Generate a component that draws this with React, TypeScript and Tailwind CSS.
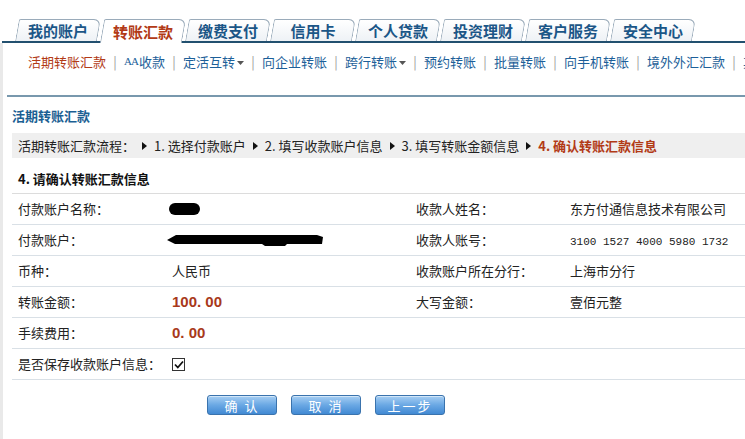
import React from 'react';

const cjk = '"Noto Sans CJK SC", "Liberation Sans", sans-serif';

const tabs = ['我的账户', '转账汇款', '缴费支付', '信用卡', '个人贷款', '投资理财', '客户服务', '安全中心'];

const subNav = [
  { label: '活期转账汇款', active: true },
  { label: '收款', aa: true },
  { label: '定活互转', caret: true },
  { label: '向企业转账' },
  { label: '跨行转账', caret: true },
  { label: '预约转账' },
  { label: '批量转账' },
  { label: '向手机转账' },
  { label: '境外外汇汇款' },
  { label: '其他' },
];

const steps = ['1. 选择付款账户', '2. 填写收款账户信息', '3. 填写转账金额信息'];

function Arrow() {
  return (
    <svg width="5" height="8" viewBox="0 0 5 8" className="mx-[7px] shrink-0">
      <path d="M0 0 L5 4 L0 8 Z" fill="#111" />
    </svg>
  );
}

function Caret() {
  return (
    <svg width="7" height="4" viewBox="0 0 7 4" className="ml-[2px] mt-[2px]">
      <path d="M0 0 L7 0 L3.5 4 Z" fill="#555" />
    </svg>
  );
}

function Tab({ label, active }: { label: string; active?: boolean }) {
  return (
    <div className={`relative flex items-center justify-center w-[82px] ${active ? 'h-[24px] -mb-[2px] z-10' : 'h-[22px]'}`}>
      <span
        className={`absolute inset-0 -skew-x-[10deg] rounded-tr-[7px] rounded-tl-[2px] border border-b-0 border-[#9aabba] ${
          active ? 'bg-white' : 'bg-gradient-to-b from-white to-[#eef2f6]'
        }`}
      />
      <span className={`relative text-[15px] font-bold leading-none ${active ? 'text-[#b23a16]' : 'text-[#1b5687]'}`}>{label}</span>
    </div>
  );
}

function Redact({ wide }: { wide?: boolean }) {
  if (wide) {
    return (
      <svg width="158" height="14" viewBox="0 0 158 14">
        <path d="M0 7 L9 2 L150 2 L156 4 L155 11 L120 11 L118 13 L98 13 L95 11 L8 11 Z" fill="#000" />
      </svg>
    );
  }
  return (
    <svg width="34" height="14" viewBox="0 0 34 14">
      <rect x="1" y="1" width="31" height="12" rx="6" fill="#000" />
    </svg>
  );
}

function Row({ l1, v1, l2, v2 }: { l1: string; v1: React.ReactNode; l2?: string; v2?: React.ReactNode }) {
  return (
    <div className="grid grid-cols-[154px_244px_154px_1fr] items-center h-[31px] border-b border-[#d9e0e6] pl-[6px] text-[13px] text-[#222]">
      <div>{l1}</div>
      <div>{v1}</div>
      <div>{l2}</div>
      <div>{v2}</div>
    </div>
  );
}

function Button({ children }: { children: React.ReactNode }) {
  return (
    <button
      type="button"
      className="w-[70px] h-[20px] rounded-[3px] border border-[#3a73ad] bg-gradient-to-b from-[#a6cef2] via-[#6aa8e4] to-[#4189d3] text-white text-[13px] leading-none tracking-[2px] shadow-[inset_0_1px_0_rgba(255,255,255,0.5)]"
    >
      {children}
    </button>
  );
}

export default function App() {
  return (
    <div className="w-[745px] h-[439px] overflow-hidden bg-white" style={{ fontFamily: cjk }}>
      {/* Main tabs */}
      <div className="h-[43px] flex items-end gap-[3px] pl-[15px] border-b-2 border-[#22506f] ml-[2px]">
        {tabs.map((t, i) => (
          <Tab key={t} label={t} active={i === 1} />
        ))}
      </div>

      <div className="border-l-[3px] border-[#e9e9e9] h-[396px]">
        {/* Sub navigation */}
        <div className="h-[38px] pt-[12px] flex items-start pl-[25px] whitespace-nowrap text-[13px] leading-[13px]">
          {subNav.map((s, i) => (
            <React.Fragment key={s.label}>
              {i > 0 && <span className="inline-block w-[18px] shrink-0 text-center text-[#9a9a9a]">|</span>}
              <span className={`flex items-center ${s.active ? 'text-[#b23a16]' : 'text-[#1d5f99]'}`}>
                {s.aa && <span className="text-[11px] tracking-[-1px] mr-[1px]" style={{ fontFamily: '"Liberation Serif", serif' }}>AA</span>}
                {s.label}
                {s.caret && <Caret />}
              </span>
            </React.Fragment>
          ))}
        </div>

        <div className="mt-[14px] ml-[4px] h-[2px] bg-[#7898ad]" />

        <div className="pl-[9px]">
          <div className="h-[36px] flex items-center text-[13px] font-bold text-[#1b5f93] pt-[2px]">活期转账汇款</div>

          {/* Process */}
          <div className="h-[25px] flex items-center bg-[#efefef] pl-[6px] text-[13px] text-[#222] whitespace-nowrap">
            <span>活期转账汇款流程：</span>
            {steps.map((s) => (
              <React.Fragment key={s}>
                <Arrow />
                <span>{s}</span>
              </React.Fragment>
            ))}
            <Arrow />
            <span className="font-bold text-[#b23a16]">4. 确认转账汇款信息</span>
          </div>

          <div className="h-[36px] flex items-center pl-[6px] pt-[6px] text-[13px] font-bold text-[#111] border-b border-[#dcdcdc]">
            4. 请确认转账汇款信息
          </div>

          <Row l1="付款账户名称：" v1={<span className="flex -ml-[4px]"><Redact /></span>} l2="收款人姓名：" v2="东方付通信息技术有限公司" />
          <Row
            l1="付款账户："
            v1={<span className="flex -ml-[5px]"><Redact wide /></span>}
            l2="收款人账号："
            v2={<span className="text-[11px]" style={{ fontFamily: '"Liberation Mono", monospace' }}>3100 1527 4000 5980 1732</span>}
          />
          <Row l1="币种：" v1="人民币" l2="收款账户所在分行：" v2="上海市分行" />
          <Row
            l1="转账金额："
            v1={<span className="text-[15px] font-bold text-[#a8391b]" style={{ fontFamily: '"Liberation Sans", sans-serif' }}>100. 00</span>}
            l2="大写金额："
            v2="壹佰元整"
          />
          <Row
            l1="手续费用："
            v1={<span className="text-[15px] font-bold text-[#a8391b]" style={{ fontFamily: '"Liberation Sans", sans-serif' }}>0. 00</span>}
          />
          <Row
            l1="是否保存收款账户信息："
            v1={
              <span className="flex items-center justify-center w-[13px] h-[13px] border border-[#333] bg-white">
                <svg width="10" height="9" viewBox="0 0 10 9">
                  <path d="M1 4.5 L3.8 7.5 L9 1.5" stroke="#111" strokeWidth="1.8" fill="none" />
                </svg>
              </span>
            }
          />

          <div className="flex gap-[14px] pl-[195px] pt-[15px]">
            <Button>确 认</Button>
            <Button>取 消</Button>
            <Button>上一步</Button>
          </div>
        </div>
      </div>
    </div>
  );
}
